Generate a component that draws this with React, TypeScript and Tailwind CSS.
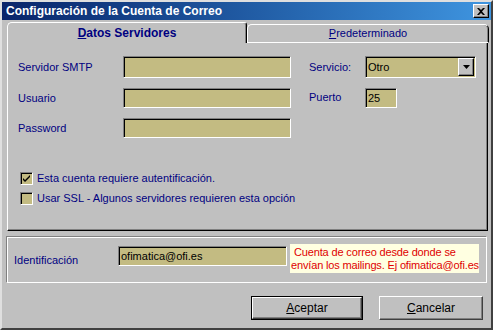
import React from "react";

const sunken =
  "border border-t-[#808080] border-l-[#808080] border-r-white border-b-white shadow-[inset_1px_1px_#000]";

function Field({ w, h = 21, value }: { w: string; h?: number; value?: string }) {
  return (
    <div
      className={`${sunken} ${w} bg-[#c3bb82] flex items-center pl-[2px] text-black`}
      style={{ height: h }}
    >
      {value}
    </div>
  );
}

function Check({ checked, label }: { checked?: boolean; label: string }) {
  return (
    <div className="flex items-center gap-[4px] h-[20px]">
      <div className={`${sunken} w-[13px] h-[13px] bg-[#c3bb82] flex items-center justify-center`}>
        {checked && (
          <svg width="9" height="9" viewBox="0 0 9 9">
            <path d="M1 4 L3 6 L8 1 L8 3 L3 8 L1 6 Z" fill="#000" />
          </svg>
        )}
      </div>
      <span className="text-[#000080]">{label}</span>
    </div>
  );
}

function Button({ label, def, w }: { label: string; def?: boolean; w: string }) {
  const first = label[0];
  const rest = label.slice(1);
  return (
    <div className={`${w} h-[24px] ${def ? "border border-black" : ""}`}>
      <div className="w-full h-full border border-t-white border-l-white border-r-[#404040] border-b-[#404040] shadow-[inset_-1px_-1px_#808080] bg-[#c0c0c0] flex items-center justify-center text-black text-[12px]">
        <span>
          <span className="underline">{first}</span>
          {rest}
        </span>
      </div>
    </div>
  );
}

export default function App() {
  return (
    <div className="w-[493px] h-[330px] bg-[#c0c0c0] border-2 border-t-[#dfdfdf] border-l-[#dfdfdf] border-r-[#404040] border-b-[#404040] flex flex-col font-['Liberation_Sans',Arial,sans-serif] text-[11px] overflow-hidden">
      {/* title bar */}
      <div className="h-[18px] bg-gradient-to-r from-[#0a246a] to-[#3f95e0] flex items-center justify-between pl-[4px] pr-[2px]">
        <span className="text-white font-bold text-[12px]">Configuración de la Cuenta de Correo</span>
        <div className="w-[16px] h-[14px] bg-[#c0c0c0] border border-t-white border-l-white border-r-black border-b-black shadow-[inset_-1px_-1px_#808080] flex items-center justify-center">
          <svg width="8" height="7" viewBox="0 0 8 7">
            <path d="M0 0 L2 0 L4 2 L6 0 L8 0 L5 3.5 L8 7 L6 7 L4 5 L2 7 L0 7 L3 3.5 Z" fill="#000" />
          </svg>
        </div>
      </div>

      {/* tabs */}
      <div className="mt-[2px] ml-[5px] flex items-end h-[21px]">
        <div className="w-[240px] h-[21px] border border-b-0 border-t-white border-l-white border-r-black rounded-tl-[5px] rounded-tr-[3px] shadow-[inset_-1px_0_#808080] flex items-center justify-center text-[#000080] font-bold text-[12px]">
          <span>
            <span className="underline">D</span>atos Servidores
          </span>
        </div>
        <div className="w-[242px] h-[19px] border border-t-white border-l-white border-b-white border-r-black rounded-tl-[5px] rounded-tr-[5px] shadow-[inset_-1px_0_#808080] flex items-center justify-center text-[#000080]">
          <span>
            <span className="underline">P</span>redeterminado
          </span>
        </div>
      </div>

      {/* tab panel */}
      <div className="ml-[5px] w-[481px] h-[188px] border border-t-0 border-l-white border-r-black border-b-black shadow-[inset_-1px_-1px_#808080] pt-[13px] pl-[10px] text-[#000080]">
        <div className="flex">
          <div className="flex flex-col gap-[10px]">
            <div className="flex items-center">
              <span className="w-[105px]">Servidor SMTP</span>
              <Field w="w-[168px]" h={22} />
            </div>
            <div className="flex items-center">
              <span className="w-[105px]">Usuario</span>
              <Field w="w-[168px]" h={20} />
            </div>
            <div className="flex items-center">
              <span className="w-[105px]">Password</span>
              <Field w="w-[168px]" h={20} />
            </div>
          </div>
          <div className="ml-[18px] flex flex-col gap-[10px]">
            <div className="flex items-center">
              <span className="w-[56px]">Servicio:</span>
              <div className={`${sunken} w-[111px] h-[22px] bg-[#c3bb82] flex items-center justify-between pl-[2px] pr-[1px] text-black`}>
                <span>Otro</span>
                <div className="w-[16px] h-[18px] bg-[#c0c0c0] border border-t-white border-l-white border-r-black border-b-black shadow-[inset_-1px_-1px_#808080] flex items-center justify-center">
                  <svg width="7" height="4" viewBox="0 0 7 4">
                    <path d="M0 0 L7 0 L3.5 4 Z" fill="#000" />
                  </svg>
                </div>
              </div>
            </div>
            <div className="flex items-start">
              <span className="w-[56px] mt-[1px]">Puerto</span>
              <Field w="w-[32px]" h={20} value="25" />
            </div>
          </div>
        </div>
        <div className="mt-[30px] ml-[2px] flex flex-col">
          <Check checked label="Esta cuenta requiere autentificación." />
          <Check label="Usar SSL - Algunos servidores requieren esta opción" />
        </div>
      </div>

      {/* identificación group */}
      <div className="mt-[5px] ml-[4px] w-[481px] h-[47px] border border-t-[#808080] border-l-[#808080] border-r-white border-b-white shadow-[inset_1px_1px_#fff] flex items-start pt-[9px] pl-[7px]">
        <span className="w-[104px] mt-[6px] text-[#000080]">Identificación</span>
        <Field w="w-[169px]" h={20} value="ofimatica@ofi.es" />
        <div className="ml-[3px] -mt-[2px] w-[189px] h-[29px] bg-[#ffffe1] text-[#e00000] leading-[13px] pl-[1px] pt-[2px] whitespace-nowrap tracking-[-0.15px]">
          <div className="pl-[3px]">Cuenta de correo desde donde se</div>
          <div>envían los mailings. Ej ofimatica@ofi.es</div>
        </div>
      </div>

      {/* buttons */}
      <div className="mt-[13px] flex justify-end gap-[16px] pr-[8px]">
        <Button label="Aceptar" def w="w-[112px]" />
        <Button label="Cancelar" w="w-[104px]" />
      </div>
    </div>
  );
}
